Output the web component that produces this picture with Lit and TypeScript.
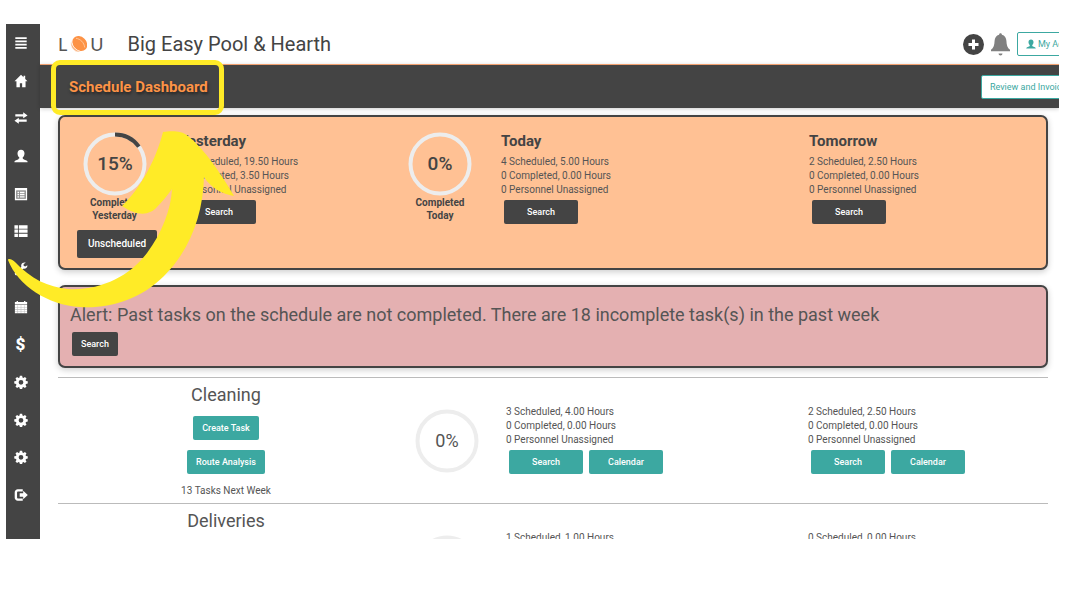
import { LitElement, html, css, svg, nothing } from "lit";
import { customElement, property } from "lit/decorators.js";

const icons: Record<string, unknown> = {
  menu: svg`<path d="M1.500 1.500h13v2h-13zM1.500 5.200h13v2h-13zM1.500 8.900h13v2h-13zM1.500 12.600h13v2h-13z"/>`,
  home: svg`<path d="M8 .8 0.600 8.400h2.200V15h3.900v-4.500h2.600V15h3.900V8.400h2.200L12.800 5.600V2h-1.900v1.700z"/>`,
  transfer: svg`<path d="M1.500 3.800h9V1.400L15.500 5l-5 3.400V6.200h-9zM14.500 9.800h-9V7.600L.5 11l5 3.600v-2.400h9z"/>`,
  user: svg`<path d="M8 .8c2.500 0 4 1.700 4 4.200 0 1.700-.8 3.500-2 4.500v1.200c0 .6.600.9 1.300 1.200l2.900 1.100c.8.3 1.300.8 1.300 1.500v.7H.5v-.7c0-.7.5-1.200 1.300-1.500l2.900-1.100c.7-.3 1.300-.6 1.300-1.200V9.500C4.800 8.500 4 6.700 4 5 4 2.500 5.500.8 8 .8z"/>`,
  listAlt: svg`<path fill-rule="evenodd" d="M1 1h14v14H1zM2.500 4v9.500h11V4zM4 5.500h1.800V7H4zM6.800 5.500H12V7H6.800zM4 8h1.800v1.500H4zM6.800 8H12v1.500H6.800zM4 10.500h1.800V12H4zM6.800 10.500H12V12H6.800z"/><path opacity=".4" d="M2.500 4h11v9.500h-11z"/>`,
  thList: svg`<path d="M.5 1.500h4v3.800h-4zM5.500 1.500h10v3.800h-10zM.5 6.300h4v3.800h-4zM5.500 6.300h10v3.800h-10zM.5 11.100h4v3.800h-4zM5.500 11.100h10v3.800h-10z"/>`,
  wrench: svg`<path d="M15.300 3.700 12.800 5.200 11 4.200V2.300L13.400.9C11.500.2 9 1 8.300 3.200c-.3.9-.2 1.700.1 2.500L1.200 12.300a1.800 1.800 0 0 0 2.500 2.500l6.700-7.200c2.600.9 5.200-1.100 4.900-3.900z"/>`,
  calendar: svg`<path fill-rule="evenodd" d="M3 1h1.500v1.200h7V1H13v1.200h2V5H1V2.200h2zM1 5.800h14V15H1z"/><path fill="#444" opacity=".35" d="M1 8.200h14v.6H1zM1 10.400h14v.6H1zM1 12.600h14v.6H1zM4 6h.6v9H4zM7.700 6h.6v9h-.6zM11.400 6h.6v9h-.6z"/>`,
  cog: svg`<path fill-rule="evenodd" d="M6.700.8h2.600l.4 2 1.100.5 1.700-1.100 1.800 1.800-1.100 1.700.5 1.100 2 .4v2.600l-2 .4-.5 1.100 1.100 1.700-1.800 1.800-1.700-1.100-1.100.5-.4 2H6.700l-.4-2-1.100-.5-1.700 1.100L1.700 13l1.100-1.700-.5-1.100-2-.4V7.200l2-.4.5-1.100L1.700 4l1.800-1.800 1.700 1.100 1.100-.5zM8 5.600a2.700 2.700 0 1 0 0 5.400 2.700 2.700 0 0 0 0-5.400z"/>`,
  logOut: svg`<path d="M10 1.500H4.500A3.500 3.500 0 0 0 .8 5.200v5.600a3.500 3.500 0 0 0 3.700 3.700H10v-2.400H4.800c-.8 0-1.300-.5-1.300-1.300V5.200c0-.8.500-1.300 1.300-1.300H10z"/><path d="M6.500 6h4V3.200L15.800 8l-5.300 4.800V10h-4z"/>`,
};

const icon = (name: string) =>
  html`<svg class="icon" viewBox="0 0 16 16" aria-hidden="true">${icons[name]}</svg>`;

@customElement("progress-ring")
export class ProgressRing extends LitElement {
  @property({ type: Number }) value = 0;
  @property({ type: Boolean }) strong = false;

  static styles = css`
    :host { display: block; width: 64px; height: 64px; }
    svg { display: block; width: 100%; height: 100%; }
    circle { fill: none; stroke: #ededed; stroke-width: 4; }
    .bar { stroke: #444; }
    text { font: 18px Roboto, sans-serif; fill: #555; text-anchor: middle; }
    .strong { font-weight: 500; font-size: 19px; fill: #444; }
  `;

  render() {
    return html`<svg viewBox="0 0 64 64" role="img" aria-label="${this.value}% completed">
      <circle cx="32" cy="32" r="29.500" />
      ${this.value
        ? svg`<circle class="bar" cx="32" cy="32" r="29.500" pathLength="100"
            stroke-dasharray="${this.value} 100" transform="rotate(-90 32 32)" />`
        : nothing}
      <text class=${this.strong ? "strong" : ""} x="32" y="38">${this.value}%</text>
    </svg>`;
  }
}

interface Stats { scheduled: string; completed: string; personnel: string; }
const stats = (s: number, sh: string, c: number, ch: string): Stats => ({
  scheduled: `${s} Scheduled, ${sh} Hours`,
  completed: `${c} Completed, ${ch} Hours`,
  personnel: "0 Personnel Unassigned",
});

const nav: [string, string][] = [
  ["menu", "Menu"], ["home", "Home"], ["transfer", "Transfers"], ["user", "Customers"],
  ["listAlt", "Forms"], ["thList", "Lists"], ["wrench", "Service"], ["calendar", "Calendar"],
  ["usd", "Billing"], ["cog", "Settings"], ["cog", "Options"], ["cog", "Preferences"], ["logOut", "Log out"],
];

const summary = [
  { day: "Yesterday", value: 15, ring: true, stats: stats(13, "19.50", 2, "3.50") },
  { day: "Today", value: 0, ring: true, stats: stats(4, "5.00", 0, "0.00") },
  { day: "Tomorrow", value: 0, ring: false, stats: stats(2, "2.50", 0, "0.00") },
];

const services = [
  { name: "Cleaning", next: 13, today: stats(3, "4.00", 0, "0.00"), tomorrow: stats(2, "2.50", 0, "0.00") },
  { name: "Deliveries", next: 1, today: stats(1, "1.00", 0, "0.00"), tomorrow: stats(0, "0.00", 0, "0.00") },
];

@customElement("app-root")
export class AppRoot extends LitElement {
  static styles = css`
    * { box-sizing: border-box; }
    :host {
      display: block; box-sizing: border-box; position: relative; height: 100vh; overflow: hidden;
      padding: 24px 6px 60px; background: #fff; color: #555;
      font: 10px/14px Roboto, sans-serif;
    }
    h1, h2, h3, p { margin: 0; font-weight: 400; }
    .frame { display: flex; height: 100%; overflow: hidden; }
    .icon { width: 14px; height: 14px; fill: currentColor; display: block; }

    .side { flex: none; width: 34px; background: #444; display: flex; flex-direction: column; padding: 0 5px 25px 0; }
    .side a { flex: 1; min-height: 0; display: flex; align-items: center; justify-content: center; color: #fff; text-decoration: none; }
    .usd { font-size: 17px; font-weight: 900; }

    .main { flex: 1; min-width: 0; }
    .top { height: 40px; padding-left: 18px; display: flex; align-items: center; }
    .logo { display: flex; align-items: center; gap: 3px; color: #555; font: 400 18px/20px Lato, sans-serif; }
    .logo svg { width: 17px; height: 17px; }
    .company { font-size: 20px; line-height: 24px; margin-left: 24px; flex: 1; color: #444; }
    .tools { display: flex; align-items: center; gap: 7px; margin-right: -42px; }
    .round { border: 0; padding: 0; background: none; display: block; }
    .round svg { display: block; }

    .btn {
      height: 24px; padding: 0 9px; border: 0; border-radius: 2px; color: #fff;
      font: 500 9px/12px Roboto, sans-serif; white-space: nowrap;
    }
    .dark { background: #444; }
    .teal { background: #3ca8a1; }
    .wide { width: 74px; }
    .big { height: 28px; font-size: 10px; padding: 0 11px; }
    .outline { display: flex; align-items: center; gap: 2px; background: #fff; border: 1px solid #3ca8a1; color: #3ca8a1; font-weight: 400; padding: 0 8px; }
    .outline .icon { width: 10px; height: 10px; }
    .account { width: 84px; }
    .review { width: 100px; margin-right: -22px; }

    .bar {
      height: 44px; padding-left: 29px; background: #444; border-top: 1px solid #f0a070;
      display: flex; align-items: center; justify-content: space-between;
      box-shadow: 0 1px 4px rgba(0, 0, 0, 0.2);
    }
    .bar h1 { font-size: 15px; line-height: 20px; font-weight: 700; color: #fd9346; text-shadow: 1px 2px 3px rgba(0, 0, 0, 0.5); }

    .content { padding: 7px 11px 0 18px; }
    .panel { border: 2px solid #444; border-radius: 7px; box-shadow: 0 2px 6px rgba(0, 0, 0, 0.2); }
    .summary {
      background: #ffc194; min-height: 155px; padding: 15px 0 9px;
      display: grid; column-gap: 10px; align-items: start;
      grid-template-columns: 109fr 200fr 102fr 298fr 237fr;
    }
    .meter { display: flex; flex-direction: column; align-items: center; color: #444; }
    .meter p { font-weight: 700; line-height: 13px; text-align: center; width: 60px; }
    .meter .btn { margin: 8px 0 0 17px; align-self: flex-start; }
    .day h2 { font-size: 15px; line-height: 18px; font-weight: 700; color: #444; padding-bottom: 5px; }
    .actions { display: flex; gap: 6px; padding: 3px 0 0 3px; }

    .alert { margin-top: 15px; background: #e4b0b1; min-height: 82px; padding: 16px 10px 10px; }
    .alert h2 { font-size: 18px; line-height: 24px; padding-bottom: 5px; }
    .alert .btn { margin-left: 2px; }

    .services { margin-top: 9px; }
    .service {
      border-top: 1px solid #bbb; height: 126px; display: grid;
      grid-template-columns: 336fr 106fr 302fr 246fr;
    }
    .kind { display: flex; flex-direction: column; align-items: center; padding-top: 6px; }
    .kind h3 { font-size: 18px; line-height: 22px; padding-bottom: 10px; }
    .kind .btn { margin-bottom: 10px; }
    .gauge { display: flex; justify-content: center; padding-top: 31px; }
    .slot { padding: 27px 0 0 6px; }

    .mark {
      position: absolute; left: 51px; top: 60px; width: 173px; height: 55px;
      border: 5px solid #ffeb27; border-radius: 9px; pointer-events: none;
    }
    .arrow { position: absolute; left: 0; top: 120px; width: 240px; height: 200px; fill: #ffeb27; pointer-events: none; }
  `;

  private lines(s: Stats) {
    return html`<p>${s.scheduled}</p><p>${s.completed}</p><p>${s.personnel}</p>`;
  }

  render() {
    return html`
      <div class="frame">
        <nav class="side">
          ${nav.map(([name, label]) => html`<a href="#" aria-label=${label}>
            ${name === "usd" ? html`<span class="usd">$</span>` : icon(name)}</a>`)}
        </nav>
        <div class="main">
          <header class="top">
            <div class="logo">
              <span>L</span>
              <svg viewBox="0 0 17 17" aria-hidden="true">
                <ellipse cx="9.800" cy="7.500" rx="8.200" ry="6.600" transform="rotate(45 9.800 7.500)" fill="#fd9346"/>
                <path fill="none" stroke="#fed3b0" stroke-width=".8" d="M6 2.300C10.500 3 14 6.500 14.800 11.500"/>
                <path fill="#fbb582" stroke="#fff" stroke-width=".6" d="M1.300 4.500C1.500 9.500 5.500 14.300 11 15.700 5 17.500-1 11 1.300 4.500z"/>
              </svg>
              <span>U</span>
            </div>
            <div class="company">Big Easy Pool &amp; Hearth</div>
            <div class="tools">
              <button class="round" aria-label="Add">
                <svg width="21" height="21" viewBox="0 0 21 21"><circle cx="10.500" cy="10.500" r="10.500" fill="#444"/><path fill="#fff" d="M9 5.500h3V9h3.500v3H12v3.500H9V12H5.500V9H9z"/></svg>
              </button>
              <button class="round" aria-label="Notifications">
                <svg width="19" height="23" viewBox="0 0 19 23" fill="#808080"><path d="M9.500.3c.9 0 1.400.6 1.400 1.500 2.900.8 4.300 3 4.500 6 .2 4.500 1 7.200 3.600 9v1.400H0v-1.400c2.600-1.800 3.400-4.500 3.600-9 .2-3 1.600-5.200 4.500-6 0-.9.500-1.500 1.400-1.500z"/><path d="M7.500 20.500h4a2 2 0 0 1-4 0z"/></svg>
              </button>
              <button class="btn outline account">${icon("user")}<span>My Account</span></button>
            </div>
          </header>
          <div class="bar">
            <h1>Schedule Dashboard</h1>
            <button class="btn outline review">Review and Invoice</button>
          </div>
          <main class="content">
            <section class="panel summary">
              ${summary.map((d) => html`
                ${d.ring ? html`<div class="meter">
                  <progress-ring strong .value=${d.value}></progress-ring>
                  <p>Completed ${d.day}</p>
                  ${d.day === "Yesterday" ? html`<button class="btn dark big">Unscheduled</button>` : nothing}
                </div>` : nothing}
                <div class="day">
                  <h2>${d.day}</h2>
                  ${this.lines(d.stats)}
                  <div class="actions"><button class="btn dark wide">Search</button></div>
                </div>`)}
            </section>
            <section class="panel alert">
              <h2>Alert: Past tasks on the schedule are not completed. There are 18 incomplete task(s) in the past week</h2>
              <button class="btn dark">Search</button>
            </section>
            <div class="services">
              ${services.map((s) => html`<section class="service">
                <div class="kind">
                  <h3>${s.name}</h3>
                  <button class="btn teal">Create Task</button>
                  <button class="btn teal">Route Analysis</button>
                  <p>${s.next} Tasks Next Week</p>
                </div>
                <div class="gauge"><progress-ring .value=${0}></progress-ring></div>
                ${[s.today, s.tomorrow].map((t) => html`<div class="slot">
                  ${this.lines(t)}
                  <div class="actions">
                    <button class="btn teal wide">Search</button>
                    <button class="btn teal wide">Calendar</button>
                  </div>
                </div>`)}
              </section>`)}
            </div>
          </main>
        </div>
      </div>
      <div class="mark"></div>
      <svg class="arrow" viewBox="0 120 240 200" aria-hidden="true">
        <path d="M8 260C8 258 12 259 15 262C31 279 48 287 68 289C100 291 130 276 147 253C162 233 171 209 172 189C167 196 162 202 157 207C150 215 138 217 122 206C140 189 156 160 163 132C170 131 181 130 188 136C205 150 220 172 234 196C222 194 211 188 204 177C203 215 190 250 164 276C139 301 107 309 80 307C48 305 18 286 8 260Z"/>
      </svg>
    `;
  }
}
